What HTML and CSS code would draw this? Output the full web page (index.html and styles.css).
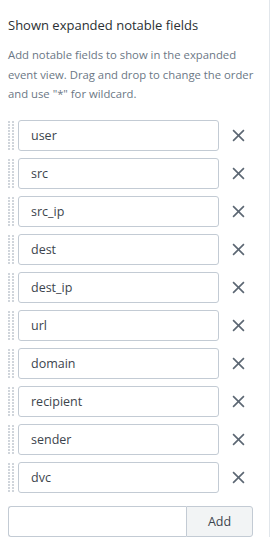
FILE: index.html
```html
<!DOCTYPE html>
<html lang="en">
  <head>
    <meta charset="UTF-8" />
    <meta name="viewport" content="width=device-width, initial-scale=1.0" />
    <title>Notable fields</title>
    <link rel="stylesheet" href="styles.css">
  </head>
  <body>
    <section class="panel">
      <h2 class="panel__title">Shown expanded notable fields</h2>
      <p class="panel__help">
        Add notable fields to show in the expanded event view. Drag and drop to
        change the order and use "*" for wildcard.
      </p>

      <ul class="fields">
        <li class="field"><span class="field__grip"></span><input class="field__input" value="user" /><button class="field__remove" aria-label="Remove"><svg viewBox="0 0 12 12"><path d="M1 1L11 11M11 1L1 11" /></svg></button></li>
        <li class="field"><span class="field__grip"></span><input class="field__input" value="src" /><button class="field__remove" aria-label="Remove"><svg viewBox="0 0 12 12"><path d="M1 1L11 11M11 1L1 11" /></svg></button></li>
        <li class="field"><span class="field__grip"></span><input class="field__input" value="src_ip" /><button class="field__remove" aria-label="Remove"><svg viewBox="0 0 12 12"><path d="M1 1L11 11M11 1L1 11" /></svg></button></li>
        <li class="field"><span class="field__grip"></span><input class="field__input" value="dest" /><button class="field__remove" aria-label="Remove"><svg viewBox="0 0 12 12"><path d="M1 1L11 11M11 1L1 11" /></svg></button></li>
        <li class="field"><span class="field__grip"></span><input class="field__input" value="dest_ip" /><button class="field__remove" aria-label="Remove"><svg viewBox="0 0 12 12"><path d="M1 1L11 11M11 1L1 11" /></svg></button></li>
        <li class="field"><span class="field__grip"></span><input class="field__input" value="url" /><button class="field__remove" aria-label="Remove"><svg viewBox="0 0 12 12"><path d="M1 1L11 11M11 1L1 11" /></svg></button></li>
        <li class="field"><span class="field__grip"></span><input class="field__input" value="domain" /><button class="field__remove" aria-label="Remove"><svg viewBox="0 0 12 12"><path d="M1 1L11 11M11 1L1 11" /></svg></button></li>
        <li class="field"><span class="field__grip"></span><input class="field__input" value="recipient" /><button class="field__remove" aria-label="Remove"><svg viewBox="0 0 12 12"><path d="M1 1L11 11M11 1L1 11" /></svg></button></li>
        <li class="field"><span class="field__grip"></span><input class="field__input" value="sender" /><button class="field__remove" aria-label="Remove"><svg viewBox="0 0 12 12"><path d="M1 1L11 11M11 1L1 11" /></svg></button></li>
        <li class="field"><span class="field__grip"></span><input class="field__input" value="dvc" /><button class="field__remove" aria-label="Remove"><svg viewBox="0 0 12 12"><path d="M1 1L11 11M11 1L1 11" /></svg></button></li>
      </ul>

      <div class="add">
        <input class="add__input" />
        <button class="add__button">Add</button>
      </div>
    </section>
  </body>
</html>
```

FILE: styles.css
```css
:root {
  --text: #3c444d;
  --muted: #6b7785;
  --border: #c3cbd4;
  --divider: #e1e6eb;
  --icon: #5c6773;
}
*,
*::before,
*::after {
  box-sizing: border-box;
}
body {
  margin: 0;
  color: var(--text);
  background: #fff;
  font-family: "Open Sans", "Liberation Sans", sans-serif;
}

.panel {
  width: 270px;
  padding: 16px 8px 0 8px;
  border-right: 1px solid var(--divider);
}
.panel__title {
  margin: 0;
  font-size: 13px;
  font-weight: 400;
  line-height: 18px;
  color: #2b3033;
}
.panel__help {
  margin: 11px 0 0;
  font-size: 11.3px;
  line-height: 19.5px;
  color: var(--muted);
}

/* Field rows */
.fields {
  list-style: none;
  margin: 16px 0 0;
  padding: 0;
  display: flex;
  flex-direction: column;
  gap: 7px;
}
.field {
  display: flex;
  align-items: center;
  height: 31px;
}
.field > * {
  flex-shrink: 0;
}
.field__grip {
  width: 6px;
  height: 31px;
  margin-right: 4px;
  background-image: linear-gradient(#fff 1px, transparent 1px),
    linear-gradient(90deg, #d0d5db 2px, transparent 2px);
  background-size: 3px 3px, 4px 3px;
}
.field__input {
  width: 201px;
  height: 31px;
  padding: 0 12px;
  border: 1px solid var(--border);
  border-radius: 3px;
  font: inherit;
  font-size: 12.5px;
  color: var(--text);
}
.field__remove {
  display: flex;
  align-items: center;
  justify-content: center;
  width: 38px;
  height: 31px;
  padding: 0;
  border: 0;
  background: none;
}
.field__remove svg {
  width: 13px;
  height: 13px;
  fill: none;
  stroke: var(--icon);
  stroke-width: 1.5;
}

/* Add row */
.add {
  display: flex;
  margin-top: 13px;
  height: 31px;
}
.add__input {
  width: 178px;
  height: 31px;
  border: 1px solid var(--border);
  border-right: 0;
  border-radius: 3px 0 0 3px;
}
.add__button {
  width: 67px;
  height: 31px;
  border: 1px solid var(--border);
  border-radius: 0 3px 3px 0;
  background: #f2f4f5;
  font: inherit;
  font-size: 12.5px;
  color: var(--text);
}
```
